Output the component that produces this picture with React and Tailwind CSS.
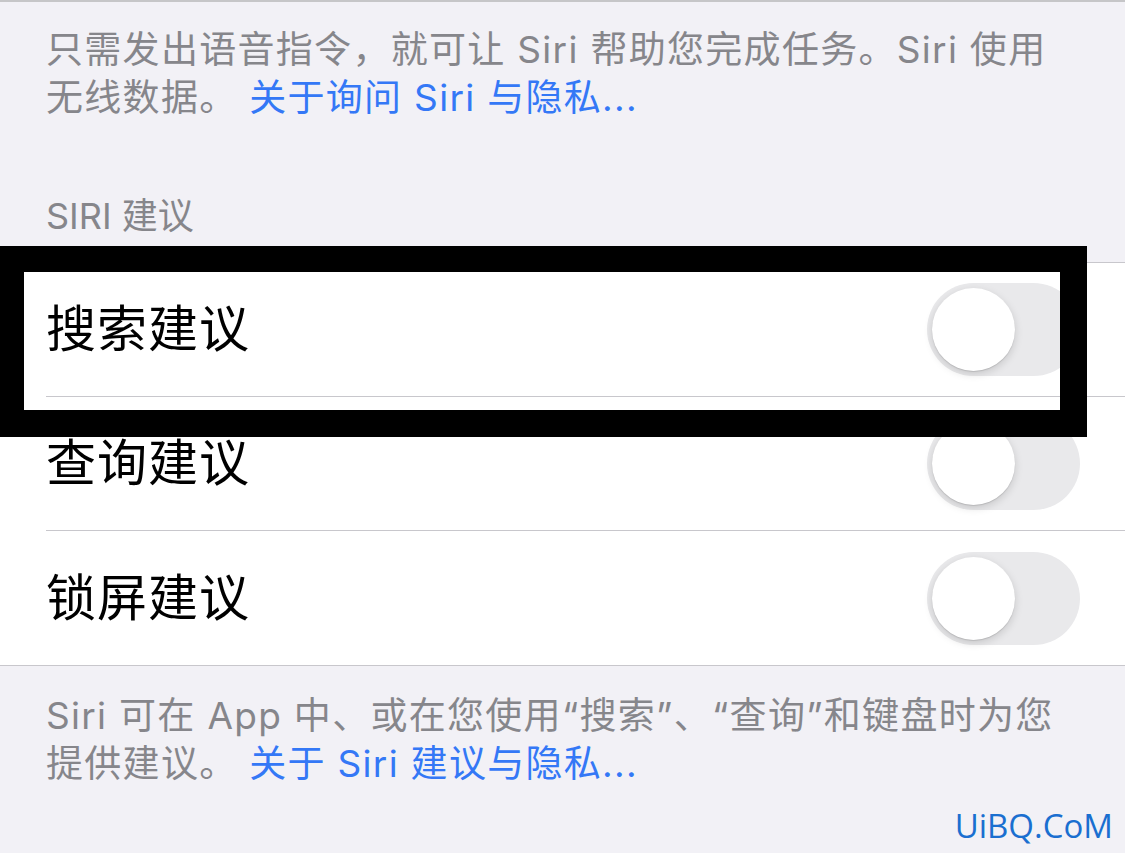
import React from 'react'

const font = { fontFamily: 'Inter, "Noto Sans CJK SC", sans-serif' }

function Toggle() {
  return (
    <div className="relative w-[153px] h-[93px] rounded-full bg-[#e9e9eb] shrink-0">
      <div className="absolute left-[5px] top-[5px] w-[83px] h-[83px] rounded-full bg-white shadow-[0_3px_8px_rgba(0,0,0,0.15),0_1px_1px_rgba(0,0,0,0.12)]" />
    </div>
  )
}

function Row({ label, last }) {
  return (
    <div className="pl-[46px]">
      <div className={`h-[134px] flex items-center justify-between pr-[45px] ${last ? '' : 'border-b border-[#c8c7cc]'}`}>
        <span className="text-[50px] text-black tracking-[1px]">{label}</span>
        <Toggle />
      </div>
    </div>
  )
}

export default function App() {
  return (
    <div className="w-[1125px] h-[853px] overflow-hidden bg-[#f2f1f6] border-t-2 border-[#c6c6c8]" style={font}>
      <p className="px-[46px] pt-[24px] text-[37px] leading-[48px] text-[#86868b] tracking-[1.3px] whitespace-nowrap">
        只需发出语音指令，就可让 Siri 帮助您完成任务。Siri 使用
        <br />
        无线数据。 <span className="text-[#3478f6]">关于询问 Siri 与隐私...</span>
      </p>

      <div className="px-[46px] pt-[72px] pb-[24px] text-[36px] leading-[44px] text-[#86868b]">SIRI 建议</div>

      <div className="relative bg-white border-y border-[#c8c7cc]">
        <Row label="搜索建议" />
        <Row label="查询建议" />
        <Row label="锁屏建议" last />
        <div className="absolute left-0 top-[-17px] w-[1087px] h-[191px] border-t-[26px] border-l-[24px] border-r-[27px] border-b-[27px] border-black" />
      </div>

      <p className="px-[46px] pt-[26px] text-[37px] leading-[48px] text-[#86868b] tracking-[1.3px] whitespace-nowrap">
        Siri 可在 App 中、或在您使用“搜索”、“查询”和键盘时为您
        <br />
        提供建议。 <span className="text-[#3478f6]">关于 Siri 建议与隐私...</span>
      </p>

      <div className="pr-[12px] pt-[18px] text-right text-[33px] leading-[40px] text-[#1a6fd0]" style={{ fontFamily: '"Open Sans", sans-serif' }}>
        UiBQ.CoM
      </div>
    </div>
  )
}
